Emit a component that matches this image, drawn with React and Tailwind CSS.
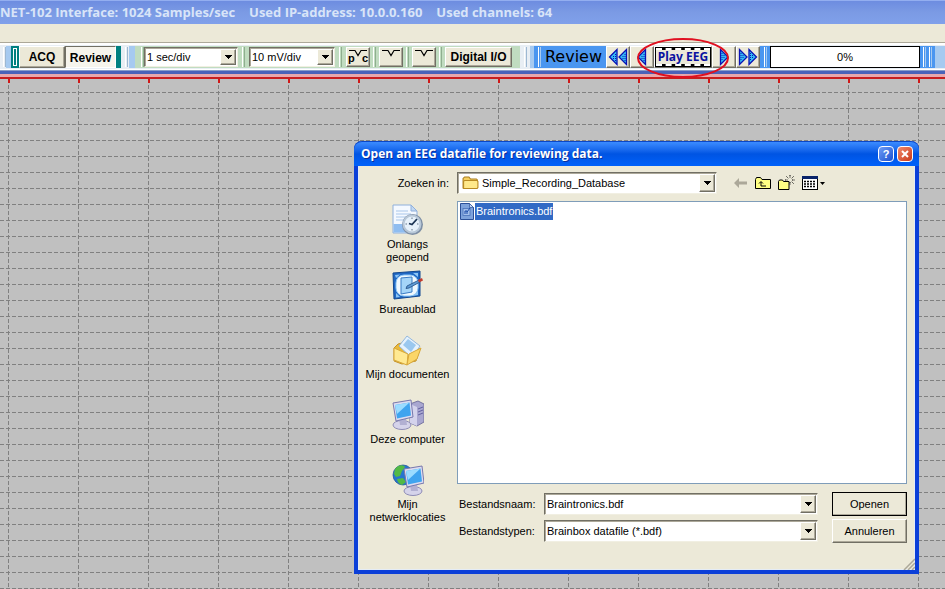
import { useState } from 'react';
import clsx from 'clsx';

const raised = 'bg-[#ece9d8] border border-t-white border-l-white border-r-[#716f64] border-b-[#716f64] shadow-[inset_-1px_-1px_0_#aca899]';
const sunken = 'bg-white border border-t-[#716f64] border-l-[#716f64] border-r-[#f1efe2] border-b-[#f1efe2] shadow-[inset_1px_1px_0_#aca899]';

function Arrow() {
  return (
    <svg width="8" height="4" viewBox="0 0 8 4" shapeRendering="crispEdges"><path d="M0 0h8L4 4z" /></svg>
  );
}

function Combo({ label, id, options, className, padding = 'pl-0.5' }) {
  return (
    <div className={clsx('relative flex', sunken, className)}>
      <select id={id} aria-label={label} className={clsx('w-full appearance-none bg-transparent pr-5 outline-none', padding)}>
        {options.map((o) => <option key={o}>{o}</option>)}
      </select>
      <span className={clsx('pointer-events-none absolute inset-y-px right-px flex w-4 items-center justify-center', raised)}>
        <Arrow />
      </span>
    </div>
  );
}

function Grip({ className }) {
  return <span className={clsx('my-px w-[3px] shrink-0 border-x border-l-white', className)} />;
}

function Triangles({ double, left }) {
  return (
    <svg width={double ? 20 : 10} height="18" viewBox={double ? '0 0 20 18' : '0 0 10 18'} className={clsx('shrink-0', left && 'rotate-180')}>
      <path d="M1.5 1.5v15L9 9z" fill="#35bdf5" stroke="#0a12b4" strokeWidth="1.3" />
      <path d="M3 5v8M5 7v4" stroke="#0a12b4" strokeDasharray="1 1" />
      {double && <path d="M11 1.5v15L18.500 9z" fill="#35bdf5" stroke="#0a12b4" strokeWidth="1.3" />}
      {double && <path d="M12.500 5v8M14.500 7v4" stroke="#0a12b4" strokeDasharray="1 1" />}
    </svg>
  );
}

function WaveButton({ letters, label }) {
  return (
    <button aria-label={label} className={clsx('relative h-5 w-6 shrink-0', raised)}>
      <svg width="20" height="10" viewBox="0 0 20 10" className="absolute left-px top-0" fill="none" stroke="#000" strokeWidth="1.2">
        <path d="M1 2.500h6l3 5 3-5h6" />
      </svg>
      {letters && (
        <span className="absolute inset-x-px top-0.5 flex justify-between text-[11px] leading-4 font-bold"><span>p</span><span>c</span></span>
      )}
    </button>
  );
}

function Toolbar() {
  const [mode, setMode] = useState('Review');
  return (
    <div className="flex h-[22px] bg-[#a6caf0] text-[11px] whitespace-nowrap">
      <div className="flex shrink-0 bg-[#e8eef4] pl-[3px]">
        <Grip className="border-r-[#9db8d2]" />
      </div>
      <div className="w-[5px] shrink-0 bg-[#a6caf0]" />
      <div className="flex shrink-0 bg-[#008080] pl-[2px] pr-[5px]">
        <span className="my-0.5 mr-0.5 w-1 border border-white" />
        {['ACQ', 'Review'].map((m) => (
          <button
            key={m}
            onClick={() => setMode(m)}
            className={clsx(
              'text-xs font-bold',
              m === 'ACQ' ? 'w-[46px]' : 'w-[51px]',
              mode === m ? 'border border-t-[#716f64] border-l-[#716f64] border-r-white border-b-white bg-[#f6f4ec] pt-0.5' : raised
            )}
          >
            {m}
          </button>
        ))}
      </div>
      <div className="flex w-2 shrink-0 bg-[#e8eef4] pl-1">
        <Grip className="border-r-[#9db8d2]" />
      </div>
      <div className="w-[6px] shrink-0 bg-[#a6caf0]" />
      <div className="flex shrink-0 items-center bg-[#c0dcc0] pl-1.5 pr-2">
        <Grip className="h-5 border-r-[#8fae8f]" />
        <Combo label="Time scale" options={['1 sec/div', '2 sec/div', '5 sec/div']} className="h-5 w-[94px]" />
        <Grip className="mx-1 h-5 border-r-[#8fae8f]" />
        <Combo label="Amplitude scale" options={['10 mV/div', '20 mV/div', '50 mV/div']} className="h-5 w-[86px]" />
        <Grip className="mx-1 h-5 border-r-[#8fae8f]" />
        <WaveButton label="Pulse calibration" letters />
        <Grip className="mx-[3px] h-5 border-r-[#8fae8f]" />
        <WaveButton label="Calibration" />
        <Grip className="mx-[3px] h-5 border-r-[#8fae8f]" />
        <WaveButton label="Pulse" />
        <Grip className="mx-[3px] h-5 border-r-[#8fae8f]" />
        <button className={clsx('h-5 w-[67px] text-xs font-bold', raised)}>Digital I/O</button>
      </div>
      <div className="flex w-2.5 shrink-0 bg-[#e8eef4] pl-1">
        <Grip className="border-r-[#9db8d2]" />
      </div>
      <div className="w-1 shrink-0 bg-[#a6caf0]" />
      <div className="flex shrink-0 items-stretch bg-[#4a96f0]">
        <Grip className="ml-1 border-r-[#a6caf0]" />
        <span className="w-[65px] text-center font-['DejaVu_Sans'] text-base leading-[22px]">Review</span>
        <button aria-label="Fast backward" className={clsx('flex w-6 items-center justify-center', raised)}><Triangles double left /></button>
        <button aria-label="Step backward" className={clsx('flex w-6 items-center justify-center', raised)}><Triangles left /></button>
        <div className={clsx('relative flex w-[58px]', raised)}>
          <button className="w-full bg-black p-px">
            <span className="flex h-full items-center justify-center border-y-2 border-dashed border-white bg-[#ece9d8] bg-clip-padding font-['Noto_Sans'] text-xs leading-[14px] font-bold text-[#0a12a0]">Play EEG</span>
          </button>
          <svg width="92" height="40" viewBox="0 0 92 40" className="pointer-events-none absolute -left-[18px] -top-[9px] z-10 max-w-none" fill="none">
            <ellipse cx="46" cy="20" rx="45" ry="19" stroke="#e01020" strokeWidth="2" />
          </svg>
        </div>
        <button aria-label="Step forward" className={clsx('flex w-6 items-center justify-center', raised)}><Triangles /></button>
        <button aria-label="Fast forward" className={clsx('flex w-6 items-center justify-center', raised)}><Triangles double /></button>
        <Grip className="ml-1 mr-[3px] border-r-[#a6caf0]" />
        <div role="progressbar" aria-valuenow={0} aria-label="Position" className="w-[150px] border border-black bg-white text-center leading-5">0%</div>
        <Grip className="mx-[3px] border-r-[#a6caf0]" />
        <Grip className="mr-[3px] border-r-[#a6caf0]" />
      </div>
    </div>
  );
}

function RecentIcon() {
  return (
    <svg width="32" height="32" viewBox="0 0 32 32">
      <path d="M1 1h18l6 6v22H1z" fill="#f4f9ff" stroke="#8fb0dc" />
      <path d="M19 1v6h6z" fill="#c2d8f2" stroke="#8fb0dc" />
      <path d="M4 7h12M4 10h15M4 13h10M4 16h7" stroke="#a9c7ea" />
      <path d="M1.500 20h14v8.500h-14z" fill="#8fbdf0" />
      <circle cx="20.500" cy="20.500" r="10.500" fill="#7e8fa5" />
      <circle cx="20" cy="20" r="8.500" fill="#e6f1fa" stroke="#b8c8d8" strokeWidth="2" />
      <path d="M20 13.500v1.500M20 25v1.500M13.500 20h1.500M25 20h1.500" stroke="#678" />
      <path d="M25 15l-5 5.500-3-1" fill="none" stroke="#1c3554" strokeWidth="1.800" />
    </svg>
  );
}

function DesktopIcon() {
  return (
    <svg width="32" height="32" viewBox="0 0 32 32">
      <path d="M1 4l27-2v25L2 30z" fill="#2068c4" stroke="#12488f" />
      <path d="M3 6l5-.5L4 9zM21 4h5v4zM4 24l4 4-4 .5zM26 22v4l-5 1z" fill="#8cc6f5" />
      <rect x="4" y="6" width="22" height="21" rx="8" fill="#eef8ff" stroke="#8cc6f5" />
      <path d="M9 9l11-1v15l-11 2z" fill="#a5d5f8" stroke="#3b7cc4" />
      <path d="M15 17l12-6 1 2-11 6-3 .5z" fill="#5e9bd5" stroke="#204a80" strokeWidth=".8" />
      <path d="M26 11l4-2 1 2.500-4 2z" fill="#c33d2f" />
    </svg>
  );
}

function DocumentsIcon() {
  return (
    <svg width="32" height="32" viewBox="0 0 32 32">
      <path d="M2 14l4-4 8-2 6 6 8 1-4 12-14 3-8-3z" fill="#e9b93a" stroke="#c3922a" />
      <path d="M7 12L15 2l13 10-8 12z" fill="#e5f2fd" stroke="#94b8de" />
      <path d="M11 11l5-6 8 6-5 7z" fill="#9ac8ef" />
      <path d="M2 14l14 6-1 11-13-5z" fill="#ffe992" stroke="#d8a93c" />
      <path d="M17 20l12-6-4 11-10 6z" fill="#fbd668" stroke="#d8a93c" />
    </svg>
  );
}

function Monitor() {
  return (
    <>
      <ellipse cx="10" cy="26" rx="9" ry="4.500" fill="#d5d3ea" stroke="#8e8cb5" />
      <path d="M7 19h7l1 7H8z" fill="#b2b0d2" />
      <path d="M1 4l18-3 2 17-17 4z" fill="#dddcf0" stroke="#7878ac" />
      <path d="M3 6l14.500-2.500 1.500 13L5 19.500z" fill="#3fa4ef" />
      <path d="M3 6l14.500-2.500L5 15z" fill="#9bdcff" />
    </>
  );
}

function ComputerIcon() {
  return (
    <svg width="32" height="32" viewBox="0 0 32 32">
      <path d="M18 5l8-3 6 3v18l-7 4-7-3z" fill="#a9a7d0" stroke="#76749f" />
      <path d="M18 5l7 3v19l-7-3z" fill="#d4d3ec" />
      <path d="M26 10l5-2M26 13l5-2M26 16l5-2" stroke="#6260a0" />
      <Monitor />
    </svg>
  );
}

function NetworkIcon() {
  return (
    <svg width="32" height="32" viewBox="0 0 32 32">
      <circle cx="11" cy="11" r="10" fill="#2675cf" stroke="#174e91" strokeWidth=".7" />
      <path d="M3 5c4-5 9-4 10-2l-3 4-2 5-4 1-2-3zM5 15l6-1 3 4-4 3c-3-1-5-4-5-6z" fill="#53ba45" />
      <g transform="translate(11 1)"><Monitor /></g>
    </svg>
  );
}

const places = [
  { name: 'Onlangs geopend', icon: RecentIcon, width: 'w-14' },
  { name: 'Bureaublad', icon: DesktopIcon, width: 'w-20' },
  { name: 'Mijn documenten', icon: DocumentsIcon, width: 'w-24' },
  { name: 'Deze computer', icon: ComputerIcon, width: 'w-24' },
  { name: 'Mijn netwerklocaties', icon: NetworkIcon, width: 'w-20' },
];

function FolderIcon() {
  return (
    <svg width="17" height="14" viewBox="0 0 16 14" preserveAspectRatio="none" className="pointer-events-none absolute left-[5px] top-1">
      <path d="M1 12V2.500L2.500 1h4L8 3h5.500l1 1v8z" fill="#f5cf5e" stroke="#a87d1c" />
      <path d="M1.500 12.500v-7L2.500 4.500h11.500l1 1v6l-1 1z" fill="#ffe98a" stroke="#b88a22" />
    </svg>
  );
}

function FileIcon() {
  return (
    <svg width="15" height="17" viewBox="0 0 15 17">
      <path d="M.5.5h9l4 4v12H.5z" fill="#7ea3dc" stroke="#2c5199" />
      <path d="M9.500.5v4h4z" fill="#c3d6f3" stroke="#2c5199" strokeWidth=".7" />
      <rect x="3" y="5.500" width="7" height="7" fill="#a3c0ec" stroke="#4a72b8" strokeWidth=".8" />
      <path d="M5 11V8h2v3M7 9l3-4" fill="none" stroke="#1a4ba8" />
    </svg>
  );
}

function NavButtons() {
  return (
    <div className="ml-4 flex items-center gap-[5px]">
      <button aria-label="Terug" className="flex w-4 justify-center">
        <svg width="14" height="10" viewBox="0 0 14 10"><path d="M0 5l5-5v3.500h8v3H5V10z" fill="#aca899" /></svg>
      </button>
      <button aria-label="Bovenliggende map" className="flex w-[18px] justify-center">
        <svg width="16" height="14" viewBox="0 0 16 14">
          <path d="M.5 12.500V3.500l1-2h4l1.500 2h8.500v9z" fill="#ffff84" stroke="#000" />
          <path d="M6 10V6M4 7.500L6 5.500l2 2M6 10h5" fill="none" stroke="#000" />
        </svg>
      </button>
      <button aria-label="Nieuwe map" className="flex w-[18px] justify-center">
        <svg width="18" height="16" viewBox="0 0 18 16">
          <path d="M1.500 14.500V6.500l1-1.500h3l1 1.500h5.500v8z" fill="#ffff84" stroke="#000" />
          <path d="M13 0v3M13 7v3M8 5h3M15 5h3M9.500 1.500l2 2M16.500 1.500l-2 2M16.500 8.500l-2-2" stroke="#000" strokeDasharray="1.500 1" />
        </svg>
      </button>
      <button aria-label="Weergave" className="ml-0.5 flex items-center gap-0.5">
        <svg width="16" height="14" viewBox="0 0 16 14">
          <rect x=".5" y=".5" width="15" height="13" fill="#fff" stroke="#000" />
          <path d="M0 1.500h16" stroke="#0a246a" strokeWidth="3" />
          <path d="M2 5.500h12M2 8h12M2 10.500h12" stroke="#000" strokeWidth="1.300" strokeDasharray="2 1" />
        </svg>
        <svg width="5" height="3" viewBox="0 0 5 3"><path d="M0 0h5L2.500 3z" /></svg>
      </button>
    </div>
  );
}

function OpenDialog() {
  const [fileName, setFileName] = useState('Braintronics.bdf');
  return (
    <section role="dialog" aria-labelledby="dialog-title" className="absolute left-[354px] top-[62px] w-[565px] rounded-t-lg border-4 border-t-0 border-[#0b3fd8] bg-[#ece9d8] text-[11px] leading-[13px] shadow-[inset_0_0_0_1px_#e4ecf6]">
      <header className="-mx-1 flex h-[25px] items-center gap-[3px] rounded-t-lg border-t border-[#0a47c8] bg-linear-to-b from-[#3c8cff] via-[#0054e3] to-[#0061fa] pl-[7px] pr-1.5">
        <h2 id="dialog-title" className="flex-1 font-['Open_Sans'] text-xs font-bold text-white [text-shadow:1px_1px_#0a2f9c]">Open an EEG datafile for reviewing data.</h2>
        <button aria-label="Help" className="flex size-4 items-center justify-center rounded-sm border border-white bg-linear-to-br from-[#6f9cf5] to-[#1c4fd0] font-bold text-white">?</button>
        <button aria-label="Sluiten" className="flex size-4 items-center justify-center rounded-sm border border-white bg-linear-to-br from-[#f0886a] to-[#c93512]">
          <svg width="8" height="8" viewBox="0 0 8 8"><path d="M1 1l6 6M7 1L1 7" stroke="#fff" strokeWidth="2" /></svg>
        </button>
      </header>

      <div className="grid grid-cols-[99px_1fr] pt-1.5 pr-2">
        <label htmlFor="folder" className="self-center pr-2 text-right">Zoeken in:</label>
        <div className="flex">
          <div className="relative">
            <Combo id="folder" options={['Simple_Recording_Database']} className="h-[22px] w-[260px]" padding="pl-6" />
            <FolderIcon />
          </div>
          <NavButtons />
        </div>

        <nav className="row-span-2 mt-2.5 flex flex-col">
          {places.map(({ name, icon: Icon, width }) => (
            <button key={name} className="flex h-[65px] flex-col items-center gap-0.5">
              <Icon />
              <span className={width}>{name}</span>
            </button>
          ))}
        </nav>

        <ul className="mt-[7px] h-[283px] border border-[#7f9db9] bg-white px-0.5 py-px">
          <li className="flex h-[17px] items-center">
            <FileIcon />
            <span className="bg-[#316ac5] px-px py-0.5 text-white">{fileName}</span>
          </li>
        </ul>

        <div className="grid grid-cols-[87px_1fr_75px] items-center gap-y-[3px] pt-2 pb-[27px]">
          <label htmlFor="file-name" className="pl-0.5">Bestandsnaam:</label>
          <div className={clsx('mr-3.5 flex h-[22px] p-px', sunken)}>
            <input id="file-name" value={fileName} onChange={(e) => setFileName(e.target.value)} className="min-w-0 flex-1 pl-px outline-none" />
            <button aria-label="Eerdere bestanden" className={clsx('flex w-4 items-center justify-center', raised)}><Arrow /></button>
          </div>
          <button className={clsx('h-6 outline-1 -outline-offset-1 outline-black', raised)}>Openen</button>
          <label htmlFor="file-type" className="pl-0.5">Bestandstypen:</label>
          <Combo id="file-type" options={['Brainbox datafile (*.bdf)']} className="mr-3.5 h-[22px]" />
          <button className={clsx('h-6', raised)}>Annuleren</button>
        </div>
      </div>

      <svg width="12" height="12" viewBox="0 0 12 12" className="absolute right-0 bottom-0">
        <path d="M1 12L12 1M5 12l7-7M9 12l3-3" stroke="#aca899" strokeWidth="1.500" />
      </svg>
    </section>
  );
}

// trace area: one division is 70px wide and 16px high
function TraceGrid() {
  return (
    <svg className="absolute inset-0 size-full" shapeRendering="crispEdges">
      <defs>
        <pattern id="rows" y="13" width="6" height="16" patternUnits="userSpaceOnUse">
          <rect width="4" height="1" fill="#808080" />
        </pattern>
        <pattern id="cols" x="8" width="70" height="6" patternUnits="userSpaceOnUse">
          <rect width="1" height="4" fill="#808080" />
        </pattern>
        <pattern id="ticks" x="8" width="70" height="4" patternUnits="userSpaceOnUse">
          <rect width="2" height="4" fill="#d01818" />
        </pattern>
      </defs>
      <rect width="100%" height="100%" fill="url(#rows)" />
      <rect width="100%" height="100%" fill="url(#cols)" />
      <rect width="100%" height="4" fill="url(#ticks)" />
    </svg>
  );
}

export default function App() {
  return (
    <div className="flex min-h-screen flex-col overflow-hidden bg-[#c0c0c0] font-['Liberation_Sans',sans-serif] text-black">
      <header className="flex h-6 shrink-0 items-center gap-3.5 bg-linear-to-b from-[#6c8be0] via-[#7b9ae4] to-[#80a0ea] pt-0.5 whitespace-nowrap font-['Open_Sans'] text-[13px] font-bold text-[#d8e4f8] shadow-[inset_0_1px_0_#93aef0]">
        <span>NET-102 Interface: 1024 Samples/sec</span>
        <span>Used IP-address: 10.0.0.160</span>
        <span>Used channels: 64</span>
      </header>
      <div className="h-[19px] shrink-0 border-b border-[#aca899] bg-[#ece9d8]" />
      <div className="shrink-0 border-t-2 border-b border-t-white border-b-white bg-[#e8eef4] py-px">
        <Toolbar />
      </div>
      <div className="h-1 shrink-0 border-t border-[#8a9cc8] bg-[#4a62b8]" />
      <div className="h-[5px] shrink-0 border-b-2 border-[#c81e1e] bg-[#e8a8ac]" />
      <main className="relative min-h-[510px] flex-1">
        <TraceGrid />
        <OpenDialog />
      </main>
    </div>
  );
}
